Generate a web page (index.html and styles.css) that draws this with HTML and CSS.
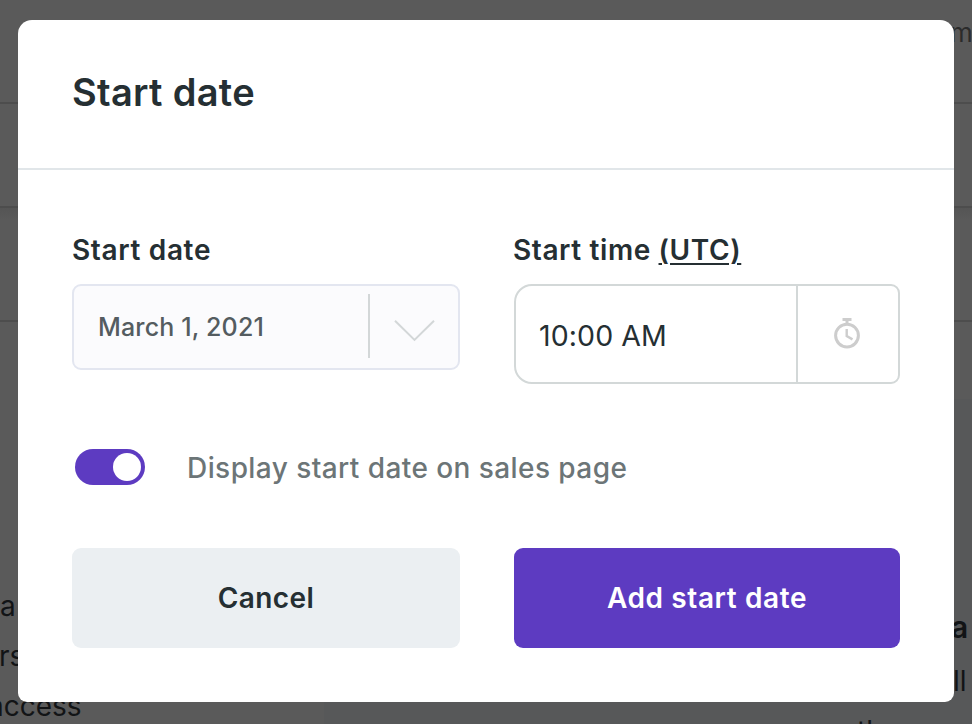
FILE: index.html
```
<!DOCTYPE html>
<html lang="en">
<head>
  <meta charset="UTF-8">
  <title>Start date</title>
  <link rel="stylesheet" href="styles.css">
</head>
<body>

  <!-- Page behind the modal -->
  <div class="page">
    <div class="topbar">m</div>
    <div class="subbar"></div>
    <div class="toolbar"></div>
    <div class="content">
      <div class="copy">
        <p class="line-a">a</p>
        <p class="line-rs">rs</p>
        <p class="line-access">access</p>
      </div>
      <div class="panel">
        <h4>a</h4>
        <p class="line-ll">ll</p>
        <p class="line-the">the</p>
      </div>
    </div>
  </div>

  <div class="overlay">
    <div class="modal">
      <div class="modal-header">
        <h1>Start date</h1>
      </div>

      <div class="modal-body">
        <div class="fields">
          <div class="field">
            <div class="label">Start date</div>
            <div class="select">
              <span class="select-value">March 1, 2021</span>
              <span class="select-divider"></span>
              <span class="select-arrow">
                <svg width="42" height="24" viewBox="0 0 42 24" fill="none" stroke="#d3d7d8" stroke-width="2">
                  <path d="M2 2.7L21.5 21.9L41 2.7"/>
                </svg>
              </span>
            </div>
          </div>

          <div class="field">
            <div class="label label-time">Start time <u>(UTC)</u></div>
            <div class="time">
              <span class="time-value">10:00 AM</span>
              <span class="time-icon">
                <svg width="28" height="34" viewBox="0 0 28 34" fill="none" stroke="#cdcdcd" stroke-width="3">
                  <circle cx="14" cy="19.6" r="11.4"/>
                  <path d="M9.5 3.5H18.5M14 3V8" />
                  <path d="M13.7 13V20L19.5 23.4" stroke-width="2.4"/>
                </svg>
              </span>
            </div>
          </div>
        </div>

        <div class="toggle-row">
          <span class="toggle"><span class="knob"></span></span>
          <span class="toggle-label">Display start date on sales page</span>
        </div>

        <div class="actions">
          <button class="btn btn-cancel">Cancel</button>
          <button class="btn btn-add">Add start date</button>
        </div>
      </div>
    </div>
  </div>

</body>
</html>
```

FILE: styles.css
```
* {
  box-sizing: border-box;
}

body {
  margin: 0;
  background: #5a5a5a;
  color: #252f33;
  font-family: Inter, "Liberation Sans", sans-serif;
  overflow: hidden;
}

.page {
  height: 724px;
  overflow: hidden;
  color: #121416;
}

.topbar {
  height: 104px;
  padding: 16px 0 0 950px;
  border-bottom: 2px solid #4d4d4d;
  font-size: 26px;
  line-height: 34px;
  color: #2b2b2b;
}

.subbar {
  height: 104px;
  border-bottom: 2px solid #4d4d4d;
}

.toolbar {
  height: 114px;
  border-bottom: 2px solid #4d4d4d;
  background: linear-gradient(#555, #5a5a5a 12px);
}

.content {
  display: grid;
  grid-template-columns: 324px 1fr;
  font-size: 28px;
  line-height: 50px;
}

.content p,
.content h4 {
  margin: 0;
}

.copy {
  padding-top: 259px;
}

.line-rs {
  text-indent: -1px;
}

.line-access {
  text-indent: -12px;
}

.panel {
  height: 325px;
  margin-top: 77px;
  padding-top: 203px;
  background: #575859;
}

.panel h4 {
  padding-left: 627px;
  font-size: 30px;
  font-weight: 600;
}

.panel .line-ll {
  padding-top: 4px;
  padding-left: 629px;
}

.panel .line-the {
  padding-left: 533px;
}

.overlay {
  position: absolute;
  top: 0;
  left: 0;
  width: 100%;
  height: 724px;
  padding: 20px 18px 22px;
}

.modal {
  height: 682px;
  background: #fff;
  border-radius: 14px 14px 9px 9px;
}

.modal-header {
  display: flex;
  align-items: center;
  height: 150px;
  padding: 0 54px 4px;
  border-bottom: 2px solid #e1e6e9;
}

h1 {
  margin: 0;
  font-size: 38px;
  font-weight: 600;
  letter-spacing: 0.3px;
}

.modal-body {
  padding: 60px 54px 54px;
}

.fields,
.actions {
  display: grid;
  grid-template-columns: 388px 386px;
  column-gap: 54px;
}

.label {
  height: 54px;
  font-size: 28px;
  font-weight: 600;
  line-height: 40px;
  letter-spacing: 0.65px;
}

.label-time {
  margin-left: -1px;
  letter-spacing: 0.6px;
}

.label u {
  text-decoration-thickness: 2px;
  text-underline-offset: 3px;
}

.select {
  display: flex;
  align-items: center;
  height: 86px;
  padding-left: 24px;
  background: #fbfbfd;
  border: 2px solid #e3e6f0;
  border-radius: 9px;
}

.select-value {
  flex: 1;
  font-size: 25px;
  font-weight: 500;
  letter-spacing: 0.15px;
  color: #545c60;
}

.select-divider {
  width: 2px;
  height: 64px;
  margin-bottom: 2px;
  background: #d3d7d8;
}

.select-arrow {
  display: flex;
  justify-content: center;
  width: 88px;
  padding-top: 6px;
}

.time {
  display: flex;
  height: 100px;
  border: 2px solid #d3d8d8;
  border-radius: 18px 9px 9px 18px;
}

.time-value {
  display: flex;
  flex: 1;
  align-items: center;
  padding: 3px 0 0 23px;
  font-size: 28.5px;
  letter-spacing: 0.1px;
}

.time-icon {
  display: flex;
  align-items: center;
  justify-content: center;
  width: 102px;
  padding: 0 2px 2px 0;
  border-left: 2px solid #d3d8d8;
}

.toggle-row {
  display: flex;
  align-items: center;
  gap: 42px;
  height: 36px;
  margin: 65px 0 63px 3px;
}

.toggle {
  display: flex;
  align-items: center;
  justify-content: flex-end;
  width: 70px;
  height: 36px;
  padding-right: 4px;
  background: #5d3bc1;
  border-radius: 18px;
}

.knob {
  width: 28px;
  height: 28px;
  background: #fff;
  border-radius: 50%;
}

.toggle-label {
  padding-top: 2px;
  font-size: 28px;
  font-weight: 500;
  letter-spacing: 0.43px;
  color: #6c7577;
}

.btn {
  height: 100px;
  padding: 0;
  border: none;
  border-radius: 9px;
  font-family: inherit;
  font-size: 28px;
  font-weight: 600;
  letter-spacing: 0.4px;
}

.btn-cancel {
  background: #ebeff2;
  color: #252f33;
}

.btn-add {
  background: #5d3bc1;
  color: #fff;
  letter-spacing: 0.6px;
}
```
